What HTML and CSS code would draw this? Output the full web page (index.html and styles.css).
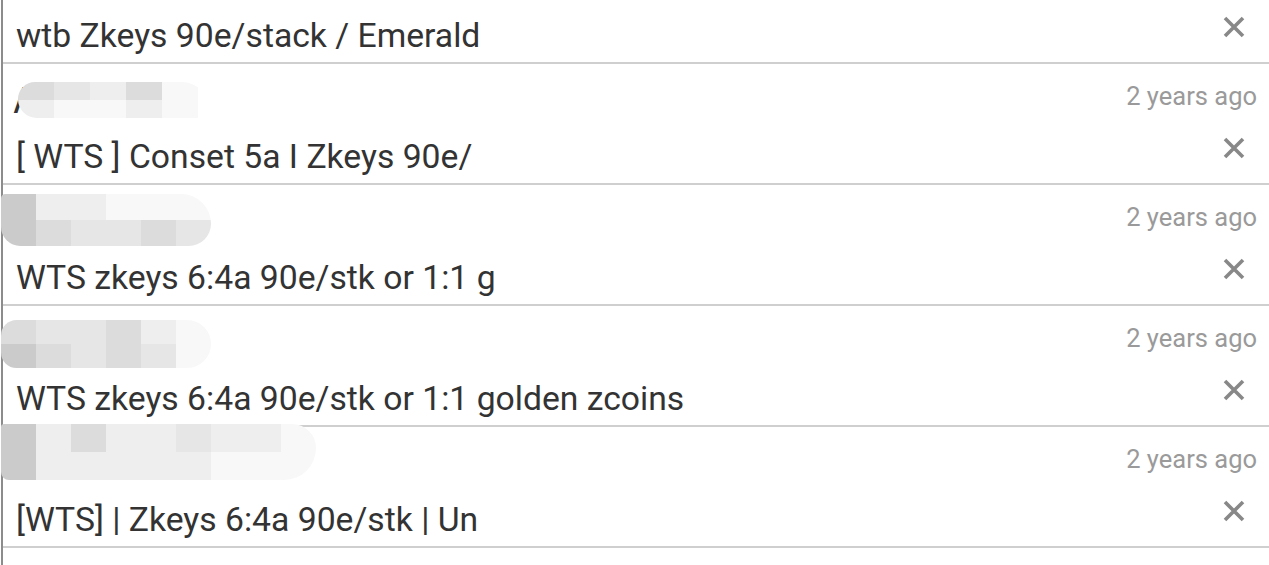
FILE: index.html
```html
<!DOCTYPE html>
<html lang="en">
<head>
    <meta charset="UTF-8">
    <meta name="viewport" content="width=device-width, initial-scale=1.0">
    <title>Trade posts</title>
    <link rel="stylesheet" href="styles.css">
</head>
<body>
    <div class="feed">
        <div class="item">
            <div class="head"></div>
            <div class="body">
                <span class="title">wtb Zkeys 90e/stack / Emerald</span>
                <svg class="close" viewBox="0 0 22 22"><path d="M2 2 L20 20 M20 2 L2 20"/></svg>
            </div>
        </div>

        <div class="item">
            <div class="head">
                <span class="mark">/</span>
                <div class="blob blob-a">
                    <div class="row"><i class="g3"></i><i class="g2"></i><i class="g1"></i><i class="g3"></i><i class="g0"></i></div>
                    <div class="row"><i class="g1"></i><i class="g0"></i><i class="g0"></i><i class="g1"></i><i class="g0"></i></div>
                </div>
                <span class="time">2 years ago</span>
            </div>
            <div class="body">
                <span class="title">[ WTS ] Conset 5a I Zkeys 90e/</span>
                <svg class="close" viewBox="0 0 22 22"><path d="M2 2 L20 20 M20 2 L2 20"/></svg>
            </div>
        </div>

        <div class="item">
            <div class="head">
                <div class="blob blob-b">
                    <div class="row"><i class="g4"></i><i class="g1"></i><i class="g1"></i><i class="g0"></i><i class="g0"></i><i class="g0"></i></div>
                    <div class="row"><i class="g4"></i><i class="g3"></i><i class="g2"></i><i class="g2"></i><i class="g3"></i><i class="g2"></i></div>
                </div>
                <span class="time">2 years ago</span>
            </div>
            <div class="body">
                <span class="title">WTS zkeys 6:4a 90e/stk or 1:1 g</span>
                <svg class="close" viewBox="0 0 22 22"><path d="M2 2 L20 20 M20 2 L2 20"/></svg>
            </div>
        </div>

        <div class="item">
            <div class="head">
                <div class="blob blob-c">
                    <div class="row"><i class="g3"></i><i class="g2"></i><i class="g2"></i><i class="g3"></i><i class="g1"></i><i class="g0"></i></div>
                    <div class="row"><i class="g4"></i><i class="g3"></i><i class="g2"></i><i class="g3"></i><i class="g2"></i><i class="g0"></i></div>
                </div>
                <span class="time">2 years ago</span>
            </div>
            <div class="body">
                <span class="title">WTS zkeys 6:4a 90e/stk or 1:1 golden zcoins</span>
                <svg class="close" viewBox="0 0 22 22"><path d="M2 2 L20 20 M20 2 L2 20"/></svg>
            </div>
        </div>

        <div class="item">
            <div class="head">
                <div class="blob blob-d">
                    <div class="row"><i class="g4"></i><i class="g1"></i><i class="g3"></i><i class="g1"></i><i class="g1"></i><i class="g2"></i><i class="g1"></i><i class="g1"></i><i class="g0"></i></div>
                    <div class="row"><i class="g4"></i><i class="g1"></i><i class="g1"></i><i class="g1"></i><i class="g1"></i><i class="g1"></i><i class="g0"></i><i class="g0"></i><i class="g0"></i></div>
                </div>
                <span class="time">2 years ago</span>
            </div>
            <div class="body">
                <span class="title">[WTS] | Zkeys 6:4a 90e/stk | Un</span>
                <svg class="close" viewBox="0 0 22 22"><path d="M2 2 L20 20 M20 2 L2 20"/></svg>
            </div>
        </div>
    </div>
</body>
</html>
```

FILE: styles.css
```css
html, body {
    margin: 0;
    padding: 0;
    background-color: #fff;
    overflow: hidden;
}
body {
    font-family: Roboto, "Liberation Sans", sans-serif;
    padding-left: 1px;
}
.feed {
    border-left: 2px solid #8c8c8c;
    margin-top: -57px;
    min-height: calc(100vh + 57px);
    box-sizing: border-box;
}
.item {
    border-bottom: 2px solid #cfcfcf;
}
.head {
    height: 64px;
    display: flex;
    align-items: center;
    justify-content: space-between;
    padding-right: 12px;
}
.time {
    font-size: 25.5px;
    color: #9a9a9a;
    margin-left: auto;
}
.body {
    height: 55px;
    display: flex;
    align-items: flex-start;
    justify-content: space-between;
    padding-left: 13px;
    padding-right: 24px;
}
.title {
    font-size: 33.7px;
    line-height: 58px;
    color: #333;
    white-space: nowrap;
}
.close {
    width: 22px;
    height: 22px;
    margin-top: 9px;
    flex-shrink: 0;
}
.close path {
    stroke: #888;
    stroke-width: 3.6;
    fill: none;
}

/* blurred user names */
.mark {
    font-size: 34px;
    font-weight: bold;
    color: #333;
    margin-left: 11px;
    margin-top: 6px;
    line-height: 40px;
}
.blob {
    position: relative;
    display: flex;
    flex-direction: column;
    overflow: hidden;
}
.blob .row {
    display: flex;
    height: 50%;
}
.blob i {
    width: 36px;
    height: 100%;
}
.blob-a {
    width: 192px;
    height: 36px;
    margin-left: -9px;
    margin-top: 8px;
    border-radius: 18px 30px 8px 20px;
}
.blob-b {
    width: 210px;
    height: 52px;
    margin-left: -2px;
    margin-top: 6px;
    border-radius: 6px 40px 30px 26px;
}
.blob-c {
    width: 210px;
    height: 48px;
    margin-left: -2px;
    margin-top: 12px;
    border-radius: 26px 40px 40px 26px;
}
.blob-d {
    width: 315px;
    height: 56px;
    margin-left: -2px;
    margin-top: -14px;
    border-radius: 4px 30px 40px 10px;
}
.g0 { background-color: #f8f8f8; }
.g1 { background-color: #eeeeee; }
.g2 { background-color: #e6e6e6; }
.g3 { background-color: #dcdcdc; }
.g4 { background-color: #cbcbcb; }
```
